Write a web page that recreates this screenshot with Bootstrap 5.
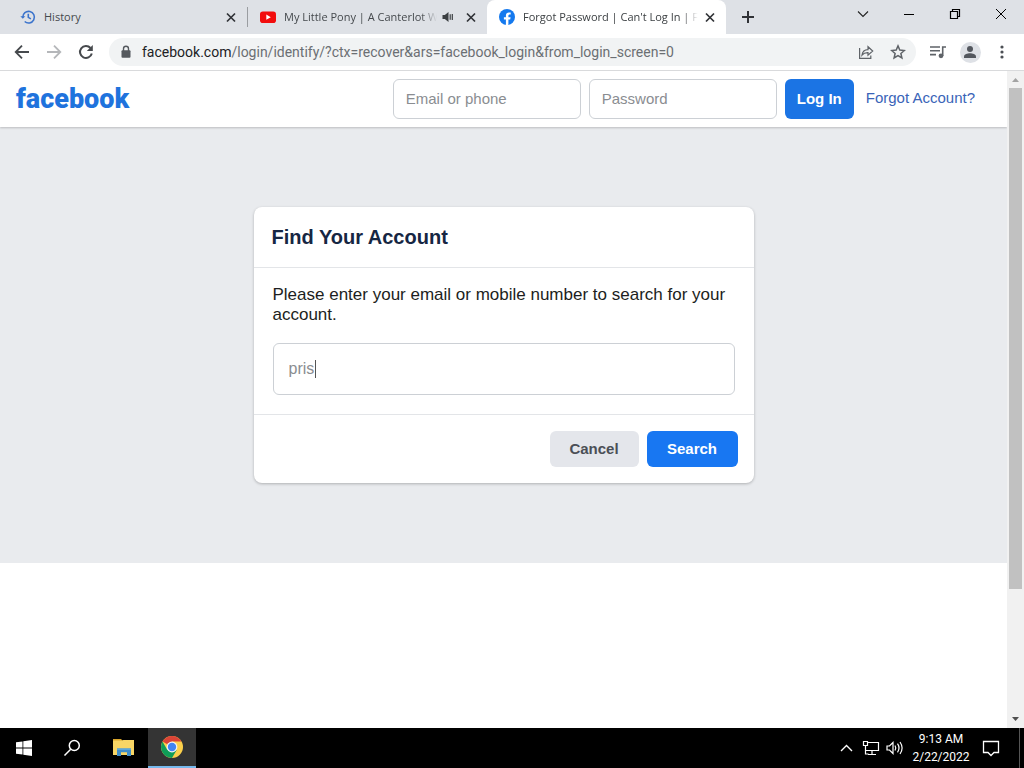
<!DOCTYPE html>
<html lang="en">
<head>
<meta charset="utf-8">
<meta name="viewport" content="width=device-width, initial-scale=1">
<title>Forgot Password | Can't Log In | Facebook</title>
<link href="https://cdn.jsdelivr.net/npm/bootstrap@5.3.0/dist/css/bootstrap.min.css" rel="stylesheet">
<style>
  body { font-family: "Liberation Sans", Arial, sans-serif; color: #1c1e21; background: #fff; }
  svg { display: block; flex: none; }
  button.plain { border: 0; background: none; padding: 0; color: inherit; display: flex; align-items: center; justify-content: center; flex: none; }
  a { text-decoration: none; }

  /* Browser window */
  .chrome-ui { font-family: "Open Sans", "Noto Sans", sans-serif; color: #3c4043; }
  .tab-strip { height: 34px; background: #dee1e6; padding-left: 8px; }
  .browser-tab { flex: 0 1 239px; min-width: 0; height: 34px; padding: 0 8px 0 12px; font-size: 11px; }
  .tab-title { flex: 1; min-width: 0; overflow: hidden; white-space: nowrap; margin-left: 8px; color: #45494d; }
  .tab-title.faded { -webkit-mask-image: linear-gradient(to right, #000 calc(100% - 16px), transparent); mask-image: linear-gradient(to right, #000 calc(100% - 16px), transparent); }
  .browser-tab.current { background: #fff; border-radius: 8px 8px 0 0; }
  .browser-tab.current .tab-title { color: #3c4043; }
  .tab-divider { width: 1px; height: 20px; background: #9a9da1; flex: none; }
  .win-btn { width: 46px; height: 28px; color: #000; }
  .toolbar { height: 37px; border-bottom: 1px solid #d9dadc; background: #fff; padding: 0 6px; color: #5f6368; }
  .tool-btn { width: 32px; height: 32px; }
  .omnibox { height: 28px; border-radius: 14px; background: #f1f3f4; margin: 0 6px 0 7px; padding: 0 2px 0 10px; }
  .omnibox a { font-family: Roboto, "Open Sans", sans-serif; font-size: 14px; line-height: 20px; color: #6b6f73; white-space: nowrap; overflow: hidden; margin-left: 9px; }
  .omnibox b { font-weight: 400; color: #202124; }
  .avatar { width: 21px; height: 21px; border-radius: 50%; background: #dee1e6; }

  /* Page */
  .site-header { height: 56px; background: #fff; padding: 0 32px 0 16px; box-shadow: 0 1px 2px rgba(0,0,0,.2); z-index: 1; }
  .wordmark { font-family: Roboto, "Open Sans", sans-serif; font-weight: 900; font-size: 27px; line-height: 32px; color: #1f73dd; }
  .field { border: 1px solid #ccd0d5; border-radius: 6px; color: #8a8d91; background: #fff; }
  .login-field { width: 188px; height: 40px; padding: 0 12px 2px; font-size: 15px; }
  .field::placeholder { color: #8a8d91; opacity: 1; }
  .log-in { width: 69px; height: 40px; font-size: 15px; font-weight: 700; background: #1b74e4; border: 0; border-radius: 6px; color: #fff; }
  .forgot { font-size: 15px; line-height: 20px; margin-left: 4px; padding-bottom: 2px; color: #3a64b8; }
  .stage { background: #e9ebee; padding: 80px 0; }
  .finder { width: 500px; max-width: 100%; background: #fff; border-radius: 8px; box-shadow: 0 1px 3px rgba(0,0,0,.25); }
  .finder h1 { font-size: 20px; line-height: 24px; font-weight: 700; color: #162643; padding: 18px; margin: 0; border-bottom: 1px solid #e3e5e8; }
  .finder-body { padding: 17px 19px 19px; font-size: 17px; line-height: 20px; }
  .finder-body label { margin-bottom: 18px; }
  .finder-body .field { width: 100%; height: 52px; padding: 0 15px; font-size: 16px; }
  .caret { position: absolute; top: 17px; left: 42px; width: 1px; height: 18px; background: #555; }
  .finder-foot { border-top: 1px solid #e3e5e8; padding: 16px; }
  .act { height: 36px; border: 0; border-radius: 6px; font-size: 15px; font-weight: 700; }
  .act-cancel { width: 89px; background: #e4e6eb; color: #4b4f56; }
  .act-search { width: 91px; background: #1877f2; color: #fff; }
  .scrollbar { width: 17px; background: #f1f1f1; flex: none; }
  .thumb { width: 13px; flex: 0 1 501px; background: #c1c1c1; }

  /* Taskbar */
  .taskbar { height: 40px; background: #000; color: #fff; font-family: "Open Sans", "Noto Sans", sans-serif; }
  .task-btn { width: 48px; height: 40px; }
  .task-btn.running { background: #343434; border-bottom: 2px solid #76b9ed !important; }
  .clock { font-family: Roboto, "Open Sans", sans-serif; width: 60px; font-size: 12px; line-height: 18px; text-align: center; white-space: nowrap; }
  .notify { margin: 0 12px 0 4px; }
  .peek { width: 5px; height: 40px; border-left: 1px solid #555; }
</style>
</head>
<body>
<div class="d-flex flex-column vh-100 overflow-hidden">
  <div class="chrome-ui">
    <div class="tab-strip d-flex">
      <div class="browser-tab d-flex align-items-center">
        <svg width="16" height="16" viewBox="0 0 16 16" fill="none" stroke="#3c74cc" stroke-width="1.6"><path d="M2.8 8.4a5.8 5.8 0 1 1 1.9 4.1M8.3 4.8v3.6l2.6 1.5"/><path d="M.3 7.2h5L2.8 9.8z" fill="#3c74cc" stroke="none"/></svg>
        <span class="tab-title">History</span>
        <button class="plain" aria-label="Close History"><svg width="16" height="16" viewBox="0 0 16 16" stroke="#303236" stroke-width="1.7"><path d="M4 4.500l8 8M12 4.500l-8 8"/></svg></button>
      </div>
      <div class="tab-divider align-self-center"></div>
      <div class="browser-tab d-flex align-items-center">
        <svg width="16" height="16" viewBox="0 0 16 16"><rect y="2.500" width="16" height="11.500" rx="2.800" fill="#f20d0d"/><path d="M6.300 5.600v5.200l4.500-2.600z" fill="#fff"/></svg>
        <span class="tab-title faded">My Little Pony | A Canterlot W</span>
        <button class="plain ms-1 me-2" aria-label="Mute tab"><svg width="14" height="14" viewBox="0 0 14 14"><path d="M1.500 5v4h2.300L7.500 12V2L3.800 5z" fill="#3c4043"/><path d="M9.200 4.300v5.400M11.300 4v6" stroke="#3c4043" stroke-width="1.200"/></svg></button>
        <button class="plain" aria-label="Close My Little Pony"><svg width="16" height="16" viewBox="0 0 16 16" stroke="#303236" stroke-width="1.700"><path d="M4 4.500l8 8M12 4.500l-8 8"/></svg></button>
      </div>
      <div class="browser-tab current d-flex align-items-center">
        <svg width="16" height="16" viewBox="0 0 16 16"><circle cx="8" cy="8" r="8" fill="#1479ee"/><path d="M6.900 16v-5.500h-2V8.200h2V6.500c0-2 1.200-3.100 3-3.100.9 0 1.800.2 1.800.2v2h-1c-1 0-1.300.6-1.300 1.200v1.400h2.200l-.4 2.300H9.400V16z" fill="#fff"/></svg>
        <span class="tab-title faded">Forgot Password | Can't Log In | F</span>
        <button class="plain ms-1" aria-label="Close Forgot Password"><svg width="16" height="16" viewBox="0 0 16 16" stroke="#303236" stroke-width="1.700"><path d="M4 4.500l8 8M12 4.500l-8 8"/></svg></button>
      </div>
      <button class="plain align-self-center ms-2" aria-label="New tab"><svg width="28" height="28" viewBox="0 0 28 28" stroke="#303236" stroke-width="2"><path d="M14 8v12M8 14h12"/></svg></button>
      <div class="d-flex ms-auto">
        <button class="plain win-btn" aria-label="Search tabs"><svg width="12" height="12" viewBox="0 0 12 12" fill="none" stroke="#222" stroke-width="1.100"><path d="M1 3.500l5 5 5-5"/></svg></button>
        <button class="plain win-btn" aria-label="Minimize"><svg width="12" height="12" viewBox="0 0 12 12" fill="none" stroke="#000"><path d="M1 6.500h10"/></svg></button>
        <button class="plain win-btn" aria-label="Restore"><svg width="12" height="12" viewBox="0 0 12 12" fill="none" stroke="#000" stroke-width="1.200"><path d="M1.500 3.500h7v7h-7zM3.500 3.500v-2h7v7h-2"/></svg></button>
        <button class="plain win-btn" aria-label="Close"><svg width="12" height="12" viewBox="0 0 12 12" stroke="#000"><path d="M1 1l10 10M11 1L1 11"/></svg></button>
      </div>
    </div>
    <div class="toolbar d-flex align-items-center">
      <button class="plain tool-btn" aria-label="Back"><svg width="16" height="16" viewBox="0 0 16 16" fill="none" stroke="#46494d" stroke-width="1.800"><path d="M15 8H2M8 1.700L1.700 8 8 14.300"/></svg></button>
      <button class="plain tool-btn" aria-label="Forward"><svg width="16" height="16" viewBox="0 0 16 16" fill="none" stroke="#b5b7ba" stroke-width="1.800"><path d="M1 8h13M8 1.700L14.300 8 8 14.300"/></svg></button>
      <button class="plain tool-btn" aria-label="Reload"><svg width="16" height="16" viewBox="0 0 16 16" fill="none" stroke="#46494d" stroke-width="2"><path d="M13.800 9.500A6 6 0 1 1 12.500 4"/><path d="M14.800 1v6h-6z" fill="#46494d" stroke="none"/></svg></button>
      <div class="omnibox d-flex align-items-center flex-fill overflow-hidden">
        <svg width="14" height="14" viewBox="0 0 14 14"><rect x="2.500" y="5.300" width="9" height="7.400" rx="1" fill="#55595e"/><path d="M4.500 6V3.800a2.500 2.500 0 0 1 5 0V6" fill="none" stroke="#55595e" stroke-width="1.400"/></svg>
        <a href="#"><b>facebook.com</b>/login/identify/?ctx=recover&amp;ars=facebook_login&amp;from_login_screen=0</a>
        <button class="plain tool-btn ms-auto" aria-label="Share"><svg width="16" height="16" viewBox="0 0 16 16" fill="none" stroke="#5f6368" stroke-width="1.200"><path d="M1.600 4v10.400h11.200V11.500"/><path d="M4 11c.5-3.600 2.700-5.300 6-5.400V2.700l4.700 4.300-4.700 4.200V8.600C7.300 8.500 5.500 9.200 4 11z"/></svg></button>
        <button class="plain tool-btn" aria-label="Bookmark"><svg width="16" height="16" viewBox="0 0 16 16" fill="none" stroke="#5f6368" stroke-width="1.500"><path d="M8 1.900l1.800 4.200 4.600.4-3.500 3 1 4.500L8 11.600 4.100 14l1-4.500-3.500-3 4.600-.4z"/></svg></button>
      </div>
      <button class="plain tool-btn" aria-label="Media"><svg width="18" height="16" viewBox="0 0 18 16" stroke="#5f6368" stroke-width="1.600"><path d="M1 3h10M1 6.800h10M1 10.600h6M13.700 12V3h3.300" fill="none"/><circle cx="12" cy="11.800" r="2.400" fill="#5f6368" stroke="none"/></svg></button>
      <button class="plain tool-btn" aria-label="Profile"><span class="avatar d-flex align-items-center justify-content-center"><svg width="14" height="14" viewBox="0 0 14 14" fill="#53575e"><circle cx="7" cy="4" r="3"/><path d="M1 13v-1.500C1 9.300 4.500 8.300 7 8.300s6 1 6 3.200V13z"/></svg></span></button>
      <button class="plain tool-btn" aria-label="Menu"><svg width="16" height="16" viewBox="0 0 16 16" fill="#4b4f54"><circle cx="8" cy="3" r="1.600"/><circle cx="8" cy="8" r="1.600"/><circle cx="8" cy="13" r="1.600"/></svg></button>
    </div>
  </div>

  <div class="d-flex flex-fill overflow-hidden">
    <main class="flex-fill overflow-hidden">
      <header class="site-header d-flex align-items-center position-relative">
        <a class="wordmark" href="#">facebook</a>
        <form class="d-flex align-items-center gap-2 ms-auto">
          <input class="field login-field" type="text" placeholder="Email or phone" aria-label="Email or phone">
          <input class="field login-field" type="password" placeholder="Password" aria-label="Password">
          <button class="log-in p-0" type="button">Log In</button>
          <a class="forgot" href="#">Forgot Account?</a>
        </form>
      </header>
      <section class="stage d-flex justify-content-center">
        <form class="finder">
          <h1>Find Your Account</h1>
          <div class="finder-body">
            <label for="identify" class="d-block">Please enter your email or mobile number to search for your account.</label>
            <div class="position-relative">
              <input class="field d-block" id="identify" type="text" value="pris">
              <span class="caret"></span>
            </div>
          </div>
          <div class="finder-foot d-flex justify-content-end gap-2">
            <button class="act act-cancel" type="button">Cancel</button>
            <button class="act act-search" type="button">Search</button>
          </div>
        </form>
      </section>
    </main>
    <div class="scrollbar d-flex flex-column align-items-center">
      <svg width="17" height="17" viewBox="0 0 17 17"><path d="M5 11l3.500-4 3.500 4z" fill="#a3a3a3"/></svg>
      <div class="thumb"></div>
      <svg class="mt-auto" width="17" height="17" viewBox="0 0 17 17"><path d="M5 6l3.500 4L12 6z" fill="#505050"/></svg>
    </div>
  </div>

  <footer class="taskbar d-flex align-items-center">
    <div class="d-flex">
      <button class="plain task-btn" aria-label="Start"><svg width="16" height="16" viewBox="0 0 16 16" fill="#fff"><path d="M0 2.300L6.500 1.400v6.200H0zM7.300 1.300L16 0v7.600H7.300zM0 8.400h6.500v6.200L0 13.700zM7.300 8.400H16V16l-8.700-1.300z"/></svg></button>
      <button class="plain task-btn" aria-label="Search"><svg width="18" height="18" viewBox="0 0 18 18" fill="none" stroke="#fff" stroke-width="1.500"><circle cx="11.300" cy="6.500" r="5"/><path d="M7.700 10.200L1.500 16.500"/></svg></button>
      <button class="plain task-btn ms-1" aria-label="File Explorer"><svg width="22" height="20" viewBox="0 0 22 20"><path d="M0 1h8l2 2h-10z" fill="#d9a52b"/><path d="M0 2.500h9L10.500 2H21v15H0z" fill="#f8d665"/><path d="M4 18v-7.500h14V18h-4v-3.800H8V18z" fill="#3f8dc9"/><path d="M4 10.500h14V12H4z" fill="#5ba8dc"/></svg></button>
      <button class="plain task-btn running" aria-label="Google Chrome"><svg width="22" height="22" viewBox="0 0 22 22"><circle cx="11" cy="11" r="11" fill="#fcd04b"/><path d="M11 11L1.500 5.500A11 11 0 0 1 20.500 5.500H11z" fill="#db4437"/><path d="M1.500 5.500A11 11 0 0 0 11 22l4.800-8.300L6.200 13.700z" fill="#0f9d58"/><circle cx="11" cy="11" r="5.400" fill="#f4f4f4"/><circle cx="11" cy="11" r="4.200" fill="#4285f4"/></svg></button>
    </div>
    <div class="d-flex align-items-center ms-auto">
      <button class="plain" aria-label="Show hidden icons"><svg width="24" height="16" viewBox="0 0 24 16" fill="none" stroke="#fff" stroke-width="1.400"><path d="M6 11l5.500-5.500L17 11"/></svg></button>
      <button class="plain" aria-label="Network"><svg width="24" height="18" viewBox="0 0 24 18" fill="none" stroke="#fff" stroke-width="1.200"><path d="M8.500 3.500h11v8h-13V7M13 11.500v3.500M9 15.500h8M4.500 2.500h4v4h-4zM6.500 6.500v8.500h3"/></svg></button>
      <button class="plain" aria-label="Volume"><svg width="24" height="18" viewBox="0 0 24 18" fill="none" stroke="#fff" stroke-width="1.200"><path d="M4 7v4h2.500l3.500 3.500v-11L6.500 7zM12 6.500q1.600 2.500 0 5M14.500 4.700q3 4.300 0 8.600M17 3q4.200 6 0 12"/></svg></button>
      <div class="clock ms-1">9:13 AM<br>2/22/2022</div>
      <button class="plain notify" aria-label="Notifications"><svg width="32" height="18" viewBox="0 0 32 18" fill="none" stroke="#fff" stroke-width="1.300"><path d="M8.500 2.500h15v11H19l-3 3-3-3H8.500z"/></svg></button>
      <div class="peek"></div>
    </div>
  </footer>
</div>
<script src="https://cdn.jsdelivr.net/npm/bootstrap@5.3.0/dist/js/bootstrap.bundle.min.js"></script>
</body>
</html>
